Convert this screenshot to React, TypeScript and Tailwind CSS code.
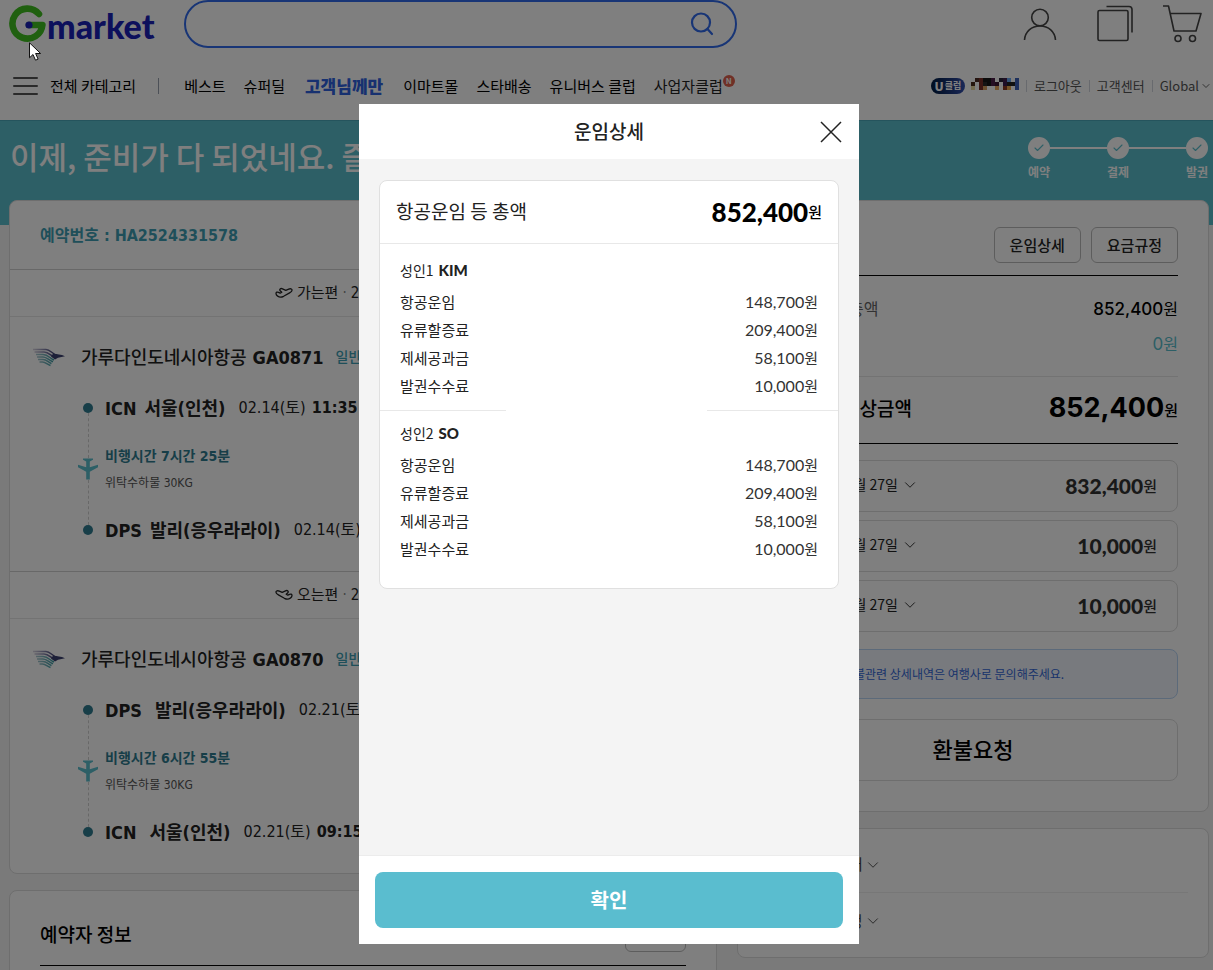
import { Check, ChevronDown } from "lucide-react";

type Fare = { label: string; amount: string };
type Stop = { code: string; name: string; date: string; time?: string };
type Trip = {
  direction: string;
  date: string;
  flight: string;
  duration: string;
  from: Stop;
  to: Stop;
  wide?: boolean;
};

const FARES: Fare[] = [
  { label: "항공운임", amount: "148,700" },
  { label: "유류할증료", amount: "209,400" },
  { label: "제세공과금", amount: "58,100" },
  { label: "발권수수료", amount: "10,000" },
];

const PAYMENTS = ["832,400", "10,000", "10,000"];

const TRIPS: Trip[] = [
  {
    direction: "가는편",
    date: "2.14",
    flight: "GA0871",
    duration: "비행시간 7시간 25분",
    from: { code: "ICN", name: "서울(인천)", date: "02.14(토)", time: "11:35" },
    to: { code: "DPS", name: "발리(응우라라이)", date: "02.14(토)" },
  },
  {
    direction: "오는편",
    date: "2.21",
    flight: "GA0870",
    duration: "비행시간 6시간 55분",
    from: { code: "DPS", name: "발리(응우라라이)", date: "02.21(토)" },
    to: { code: "ICN", name: "서울(인천)", date: "02.21(토)", time: "09:15" },
    wide: true,
  },
];

// 4px cells covering the member name
const MASK = [
  [".", "#4a2a22", "#7a3028", "#161616", "#161616", "#4a1c46", ".", "#2a2438", "#43204c", "#6aa8f0", ".", "#3c60b8"],
  ["#4a2c1c", ".", "#7a3028", "#2a2a2a", "#161616", "#4a1c46", "#3a1430", ".", "#3a1c50", "#222222", "#222222", "#3c60b8"],
  ["#e8d8a0", ".", "#7a3028", "#d8a060", ".", ".", "#e8a860", ".", "#8a3820", "#e8a850", ".", "#3c60b8"],
];

function GmarketLogo() {
  return (
    <a href="#home" aria-label="Gmarket" className="flex w-[175px] shrink-0 items-center">
      <svg width="38" height="40" viewBox="0 0 38 40" fill="none" className="shrink-0">
        <path
          d="M30 10A15 15 0 1 0 33.4 21H20"
          stroke="#40c020"
          strokeWidth="6.6"
          strokeLinecap="round"
          strokeLinejoin="round"
        />
        <circle cx="20" cy="21" r="3.6" fill="#1a20b8" />
      </svg>
      <span className="pt-1 font-[Lato] text-[34px] leading-10 font-black text-[#1a20b8]">market</span>
    </a>
  );
}

function Separator() {
  return <span className="h-3 w-px bg-gray-300" />;
}

function SiteHeader() {
  return (
    <header className="h-[120px] bg-white px-[9px]">
      <div className="flex h-12 items-center">
        <GmarketLogo />
        <form className="flex h-12 w-[553px] items-center rounded-full border-2 border-[#316bec] pr-5">
          <input aria-label="검색" className="h-full min-w-0 flex-1 bg-transparent px-6 outline-none" />
          <button type="button" aria-label="검색하기">
            <svg width="28" height="28" viewBox="0 0 28 28" fill="none" stroke="#316bec" strokeWidth="2.2">
              <circle cx="14" cy="12.5" r="9" />
              <path d="M20.5 19L25 24" strokeLinecap="round" />
            </svg>
          </button>
        </form>
        <div className="ml-auto flex items-center gap-7">
          <a href="#my" aria-label="나의 쇼핑정보">
            <svg width="36" height="40" viewBox="0 0 36 40" fill="none" stroke="#444" strokeWidth="1.6">
              <circle cx="18" cy="13.5" r="8.3" />
              <path d="M2.5 36C3 27.5 9.5 22 18 22s15 5.500 15.500 14" />
            </svg>
          </a>
          <a href="#recent" aria-label="최근 본 상품" className="ml-[10px]">
            <svg width="38" height="40" viewBox="0 0 38 40" fill="none" stroke="#444" strokeWidth="1.6">
              <rect x="2" y="6.5" width="30" height="30" rx="1.5" />
              <path d="M10.5 2.500H33a3 3 0 0 1 3 3V28.5" />
            </svg>
          </a>
          <a href="#cart" aria-label="장바구니">
            <svg width="42" height="40" viewBox="0 0 42 40" fill="none" stroke="#444" strokeWidth="1.6">
              <path d="M1 2h5.500L12 27h22l5-17.500H8.500" strokeLinejoin="round" />
              <circle cx="16" cy="34.5" r="3" />
              <circle cx="30.5" cy="34.5" r="3" />
            </svg>
          </a>
        </div>
      </div>

      <div className="flex h-[72px] items-center pt-1 pl-1 text-[15px] whitespace-nowrap text-black">
        <button type="button" className="flex items-center gap-3">
          <svg width="25" height="20" viewBox="0 0 25 20" stroke="#555" strokeWidth="2" strokeLinecap="round">
            <path d="M1 2h23M1 10h23M1 18h23" />
          </svg>
          전체 카테고리
        </button>
        <span className="ml-[22px] h-4 w-px bg-gray-400" />
        <nav className="ml-[25px] flex items-center gap-[18px]">
          <a href="#best">베스트</a>
          <a href="#super">슈퍼딜</a>
          <a href="#only" className="mx-[2px] text-[17px] font-black text-[#2f62e0]">고객님께만</a>
          <a href="#emart">이마트몰</a>
          <a href="#star">스타배송</a>
          <a href="#universe">유니버스 클럽</a>
          <a href="#biz" className="flex text-[#222]">
            사업자클럽
            <span className="grid size-3 place-items-center rounded-full bg-[#e0604c] text-[8px] font-bold text-white">
              N
            </span>
          </a>
        </nav>
        <div className="-mr-2 ml-auto flex items-center gap-[7px] text-[13px] text-[#555]">
          <span className="flex items-center gap-[6px]">
            <span className="flex h-4 w-[34px] items-center justify-center gap-px rounded-full bg-linear-to-r from-[#001a40] to-[#3450b0] text-[9px] font-bold text-white">
              <b className="text-[12px]">U</b>클럽
            </span>
            <svg width="48" height="12" viewBox="0 0 12 3" shapeRendering="crispEdges" className="-mt-1">
              {MASK.map((row, y) =>
                row.map((c, x) => c !== "." && <rect key={`${x}-${y}`} x={x} y={y} width="1" height="1" fill={c} />)
              )}
            </svg>
          </span>
          <Separator />
          <a href="#logout">로그아웃</a>
          <Separator />
          <a href="#help">고객센터</a>
          <Separator />
          <button type="button" className="flex items-center gap-px">
            Global
            <ChevronDown size={12} strokeWidth={1.8} />
          </button>
        </div>
      </div>
    </header>
  );
}

function Banner() {
  const steps = ["예약", "결제", "발권"];
  return (
    <section className="flex h-[105px] justify-between overflow-hidden border-t border-[#4aa9ba] bg-[#5abecd] pr-[5px] pl-[10px] whitespace-nowrap text-white">
      <h1 className="mt-3 text-[31px] leading-[46px] font-medium">이제, 준비가 다 되었네요. 즐거운 여행</h1>
      <ol className="mt-4 flex">
        {steps.map((s, i) => (
          <li key={s} className="flex">
            {i > 0 && <span className="mt-[10px] h-[2px] w-[57px] bg-white" />}
            <span className="flex w-[22px] flex-col items-center text-[12px] leading-[18px] font-bold">
              <span className="mb-1 grid size-[22px] place-items-center rounded-full bg-white text-[#5abecd]">
                <Check size={12} strokeWidth={2.2} />
              </span>
              {s}
            </span>
          </li>
        ))}
      </ol>
    </section>
  );
}

function PlaneOutline({ landing }: { landing?: boolean }) {
  return (
    <svg
      width="18"
      height="14"
      viewBox="0 0 18 14"
      fill="none"
      stroke="#222"
      strokeWidth="1.3"
      strokeLinejoin="round"
      className={landing ? "-scale-x-100" : ""}
    >
      <path d="M1 7.5c0-1.300 1.200-1.800 2.400-1.200l1.800.9 1.600-.9-1.900-1.800c-.6-1.300.6-2.300 2-1.900l3.900 1.800 2.900-1.300c1.700-.7 3.300-.2 3.400.9 0 1.300-1 2.100-2.500 2.900l-6 3.400c-1.900 1-4.600.9-6-.2C1.500 9.300 1 8.500 1 7.500z" />
    </svg>
  );
}

function GarudaMark() {
  return (
    <svg width="32" height="19" viewBox="0 0 32 19" fill="none" strokeWidth="1.5">
      <defs>
        <linearGradient id="garuda-top" x1="0" y1="0" x2="24" y2="0" gradientUnits="userSpaceOnUse">
          <stop offset="0" stopColor="#d8d4e0" />
          <stop offset="0.5" stopColor="#8484ac" />
          <stop offset="1" stopColor="#2a2a60" />
        </linearGradient>
        <linearGradient id="garuda-low" x1="0" y1="0" x2="20" y2="0" gradientUnits="userSpaceOnUse">
          <stop offset="0" stopColor="#c0d0d8" />
          <stop offset="1" stopColor="#3f9ca4" />
        </linearGradient>
      </defs>
      <g stroke="url(#garuda-top)">
        <path d="M0 1.500h13.010c4 0 6 4 11 6" />
        <path d="M1.500 4h9.500c5 0 7 4.500 12 6" />
      </g>
      <g stroke="url(#garuda-low)">
        <path d="M3 6.500h7c5 0 7 4 11 5.500" />
        <path d="M4 9h6c4 0 6 3.500 10 4.800" />
        <path d="M5 11.500h5c3.500 0 5.500 3 8.500 4" />
        <path d="M6.500 14h3c3 0 5 2.500 8 3.500" />
      </g>
      <path d="M20 5.800c4 .4 8 .7 12 2.400l-7 1.600-3 1.800-4-3z" fill="#3a4070" />
    </svg>
  );
}

function StopLine({ stop, wide }: { stop: Stop; wide?: boolean }) {
  return (
    <div className="flex h-6 items-center text-[18px] font-bold text-[#222]">
      <span>{stop.code}</span>
      <span className={wide ? "ml-[13px]" : "ml-2"}>{stop.name}</span>
      <span className="ml-[13px] text-[16px] font-normal">{stop.date}</span>
      {stop.time && <span className="ml-[6px] text-[16px]">{stop.time}</span>}
    </div>
  );
}

function TripSection({ trip, landing }: { trip: Trip; landing?: boolean }) {
  return (
    <section className="border-t border-[#d0d0d0]">
      <h3 className="flex h-[47px] items-center gap-1 border-b border-[#e6e6e6] pl-[265px] text-[15px] text-[#222]">
        <PlaneOutline landing={landing} />
        <span>{trip.direction}</span>
        <span className="text-[#888]">·</span>
        <span>{trip.date}</span>
      </h3>
      <div className="h-[254px] pt-7 pl-[23px]">
        <div className="flex h-6 items-center text-[18px] text-[#222]">
          <GarudaMark />
          <span className="ml-4 font-medium">가루다인도네시아항공</span>
          <span className="ml-[6px] font-bold">{trip.flight}</span>
          <span className="ml-3 text-[14px] font-medium text-[#3f9fb4]">일반석</span>
        </div>
        <div className="mt-[27px] ml-[45px] flex gap-[7px]">
          <div className="flex w-5 flex-col items-center py-[7px]">
            <span className="size-[10px] rounded-full bg-[#2f7c90]" />
            <span className="flex-1 border-l border-dashed border-[#d0d0d0]" />
            <svg width="20" height="22" viewBox="0 0 20 22" fill="#5abecd">
              <path d="M5 .5h10v1.300l-3.200 1.700V9.200L20 6.800v2.400l-8.200 4.600V21.500H8.200v-7.700L0 9.200V6.800l8.200 2.400V3.500L5 1.800z" />
            </svg>
            <span className="flex-1 border-l border-dashed border-[#d0d0d0]" />
            <span className="size-[10px] rounded-full bg-[#2f7c90]" />
          </div>
          <div className="whitespace-nowrap">
            <StopLine stop={trip.from} wide={trip.wide} />
            <p className="mt-[26px] text-[14px] leading-5 font-bold text-[#2f7c90]">{trip.duration}</p>
            <p className="mt-[7px] mb-[25px] text-[12px] leading-5 text-[#555]">위탁수하물 30KG</p>
            <StopLine stop={trip.to} wide={trip.wide} />
          </div>
        </div>
      </div>
    </section>
  );
}

function BookingColumn() {
  return (
    <div className="min-w-0 flex-1 space-y-4 font-['DejaVu_Sans_Condensed','Noto_Sans_CJK_KR',sans-serif]">
      <section className="overflow-hidden rounded-lg border border-[#dcdcdc] bg-white">
        <h2 className="flex h-[68px] items-center pt-px pl-[30px] text-[16px] font-bold text-[#3f9fb4]">
          예약번호 : HA2524331578
        </h2>
        {TRIPS.map((t, i) => (
          <TripSection key={t.flight} trip={t} landing={i === 1} />
        ))}
      </section>
      <section className="h-[200px] rounded-lg border border-[#dcdcdc] bg-white px-[30px] pt-[25px]">
        <div className="flex h-[50px] justify-between border-b border-black">
          <h2 className="font-['Noto_Sans_CJK_KR',sans-serif] text-[19px] leading-9 font-medium text-black">예약자 정보</h2>
          <button type="button" aria-label="예약자 정보 수정" className="h-9 w-[61px] rounded-md border border-[#bbb]" />
        </div>
      </section>
    </div>
  );
}

function PaymentColumn() {
  return (
    <div className="w-[472px] shrink-0 space-y-4">
      <section className="rounded-lg border border-[#dcdcdc] bg-white px-[30px] pt-[26px] pb-[30px] text-black">
        <div className="flex h-[49px] justify-end gap-[10px] border-b border-black text-[15px] font-medium text-[#222]">
          <button type="button" className="h-9 rounded-md border border-[#bbb] px-[15px]">운임상세</button>
          <button type="button" className="h-9 rounded-md border border-[#bbb] px-[15px]">요금규정</button>
        </div>
        <dl className="grid h-[101px] grid-cols-2 content-center border-b border-[#e6e6e6] text-[16px] leading-[34px]">
          <dt className="pl-[81px] text-[#666]">총액</dt>
          <dd className="text-right">
            <span className="font-[Inter] text-[17px] font-medium">852,400</span>원
          </dd>
          <dd className="col-start-2 text-right text-[#5abecd]">
            <span className="font-[Inter] text-[17px]">0</span>원
          </dd>
        </dl>
        <div className="flex h-[67px] items-center justify-between border-b border-black pb-1">
          <span className="pl-[74px] text-[19px] font-medium">예상금액</span>
          <span className="flex items-center text-[15px] font-medium">
            <b className="font-[Inter] text-[27px]">852,400</b>
            <span className="pt-1">원</span>
          </span>
        </div>
        <ul className="mt-4 space-y-2">
          {PAYMENTS.map((amount, i) => (
            <li
              key={i}
              className="flex h-[52px] items-center justify-between rounded-lg border border-[#dcdcdc] pr-5 pl-[69px] text-[#222]"
            >
              <button type="button" className="flex items-center gap-[3px] pb-[3px] text-[14px]">
                12월 27일
                <ChevronDown size={18} strokeWidth={1.2} />
              </button>
              <span className="flex items-center text-[15px] font-medium text-[#333]">
                <b className="font-[Lato] text-[21px] font-black">{amount}</b>원
              </span>
            </li>
          ))}
        </ul>
        <p className="mt-[17px] rounded-lg border border-[#b8d4f4] bg-[#f0f5fd] pl-[85px] text-[12px] leading-[48px] text-[#3467d6]">
          불관련 상세내역은 여행사로 문의해주세요.
        </p>
        <button
          type="button"
          className="mt-5 h-[62px] w-full rounded-lg border border-[#dcdcdc] pb-1 text-[22px] font-medium"
        >
          환불요청
        </button>
      </section>
      <section className="rounded-lg border border-[#dcdcdc] bg-white px-5 py-2 text-[15px] text-[#444]">
        {["안내", "규정"].map((label) => (
          <button
            key={label}
            type="button"
            className="flex h-14 w-full items-center gap-px border-[#eee] pl-[77px] not-last:border-b"
          >
            {label}
            <ChevronDown size={18} strokeWidth={1.2} />
          </button>
        ))}
      </section>
    </div>
  );
}

function Passenger({ label, name }: { label: string; name: string }) {
  return (
    <>
      <h3 className="flex h-5 items-center gap-[5px] text-[14px] text-[#222]">
        {label}
        <b className="font-[Lato] text-[15px] font-black">{name}</b>
      </h3>
      <dl className="mt-2 mb-px text-[15px] leading-7 text-[#333]">
        {FARES.map((f) => (
          <div key={f.label} className="flex justify-between">
            <dt className="text-[#222]">{f.label}</dt>
            <dd>
              <span className="font-[Lato] text-[16px]">{f.amount}</span>원
            </dd>
          </div>
        ))}
      </dl>
    </>
  );
}

function FareDialog() {
  return (
    <div className="fixed inset-0 flex justify-center bg-black/50 pt-[104px] pb-[26px] pl-[5px]">
      <div role="dialog" aria-modal="true" aria-labelledby="fare-title" className="flex w-[500px] flex-col bg-white">
        <div className="relative flex h-[55px] shrink-0 items-center justify-center">
          <h2 id="fare-title" className="text-[19px] font-medium text-[#222]">운임상세</h2>
          <button type="button" aria-label="닫기" className="absolute top-[17px] right-[17px]">
            <svg width="22" height="22" viewBox="0 0 22 22" stroke="#222" strokeWidth="1.5">
              <path d="M1 1l20 20M21 1L1 21" />
            </svg>
          </button>
        </div>
        <div className="min-h-0 flex-1 overflow-hidden bg-[#f4f4f4] px-5 pt-[21px]">
          <div className="rounded-lg border border-[#e0e0e0] bg-white">
            <div className="flex h-[63px] items-center justify-between border-b border-[#e8e8e8] px-4">
              <span className="pb-[2px] text-[19px] text-[#222]">항공운임 등 총액</span>
              <span className="flex items-center text-[15px] font-medium text-black">
                <b className="font-[Lato] text-[26px] font-black">852,400</b>원
              </span>
            </div>
            <div className="px-5 pt-4 pb-[9px]">
              <Passenger label="성인1" name="KIM" />
            </div>
            <div className="flex justify-between">
              <span className="h-px w-[126px] bg-[#e8e8e8]" />
              <span className="h-px w-[131px] bg-[#e8e8e8]" />
            </div>
            <div className="px-5 pt-3 pb-6">
              <Passenger label="성인2" name="SO" />
            </div>
          </div>
        </div>
        <div className="shrink-0 border-t border-[#ececec] p-4">
          <button type="button" className="h-14 w-full rounded-lg bg-[#5abdcf] text-[20px] font-bold text-white">
            확인
          </button>
        </div>
      </div>
    </div>
  );
}

function Cursor() {
  return (
    <svg width="13" height="20" viewBox="0 0 13 20" className="fixed top-[42px] left-[29px]">
      <path d="M.5.8v15l3.500-3.300 2.500 5.700 2.600-1.100-2.500-5.600h5z" fill="#fff" stroke="#111" />
    </svg>
  );
}

export default function App() {
  return (
    <div className="h-screen overflow-hidden bg-[#f4f4f4] font-['Noto_Sans_CJK_KR',sans-serif]">
      <SiteHeader />
      <Banner />
      <main className="-mt-[25px] flex items-start gap-5 pr-1 pl-[9px]">
        <BookingColumn />
        <PaymentColumn />
      </main>
      <FareDialog />
      <Cursor />
    </div>
  );
}
